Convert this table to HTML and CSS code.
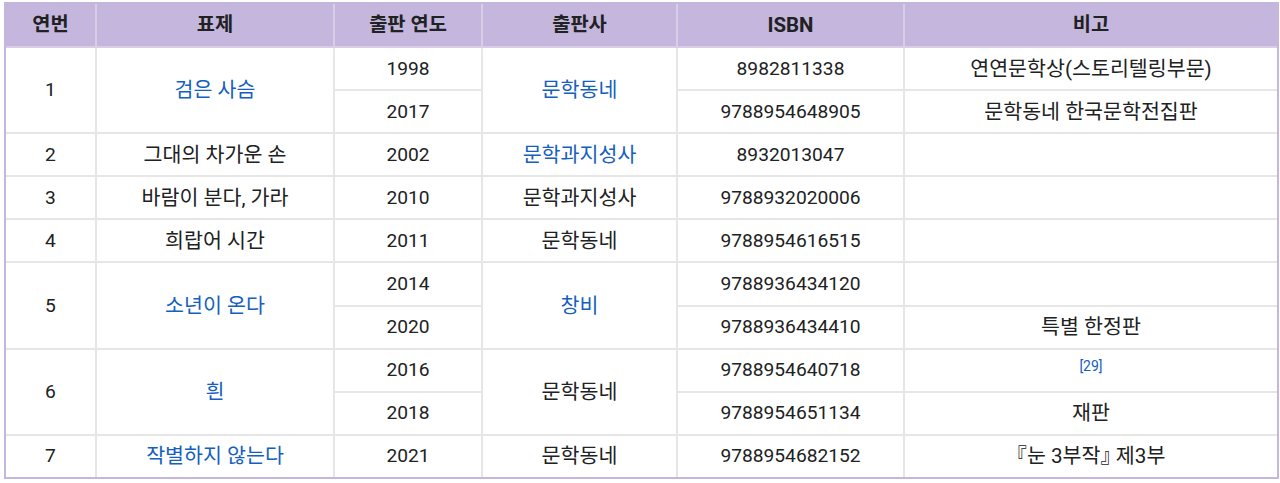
FILE: index.html
```html
<!DOCTYPE html>
<html lang="ko">
<head>
<meta charset="utf-8">
<title>작품 목록</title>
<link rel="stylesheet" href="styles.css">
</head>
<body>
<div class="wrap">
<table class="works">
  <colgroup>
    <col class="c-no"><col class="c-title"><col class="c-year"><col class="c-pub"><col class="c-isbn"><col class="c-note">
  </colgroup>
  <thead>
    <tr><th>연번</th><th>표제</th><th>출판 연도</th><th>출판사</th><th class="latin">ISBN</th><th>비고</th></tr>
  </thead>
  <tbody>
    <tr><td class="num" rowspan="2">1</td><td rowspan="2"><a href="#">검은 사슴</a></td><td class="num">1998</td><td rowspan="2"><a href="#">문학동네</a></td><td class="num">8982811338</td><td>연연문학상(스토리텔링부문)</td></tr>
    <tr><td class="num">2017</td><td class="num">9788954648905</td><td>문학동네 한국문학전집판</td></tr>
    <tr><td class="num">2</td><td>그대의 차가운 손</td><td class="num">2002</td><td><a href="#">문학과지성사</a></td><td class="num">8932013047</td><td></td></tr>
    <tr><td class="num">3</td><td>바람이 분다, 가라</td><td class="num">2010</td><td>문학과지성사</td><td class="num">9788932020006</td><td></td></tr>
    <tr><td class="num">4</td><td>희랍어 시간</td><td class="num">2011</td><td>문학동네</td><td class="num">9788954616515</td><td></td></tr>
    <tr><td class="num" rowspan="2">5</td><td rowspan="2"><a href="#">소년이 온다</a></td><td class="num">2014</td><td rowspan="2"><a href="#">창비</a></td><td class="num">9788936434120</td><td></td></tr>
    <tr><td class="num">2020</td><td class="num">9788936434410</td><td>특별 한정판</td></tr>
    <tr><td class="num" rowspan="2">6</td><td rowspan="2"><a href="#">흰</a></td><td class="num">2016</td><td rowspan="2">문학동네</td><td class="num">9788954640718</td><td><sup class="ref"><a href="#">[29]</a></sup></td></tr>
    <tr><td class="num">2018</td><td class="num">9788954651134</td><td>재판</td></tr>
    <tr><td class="num">7</td><td><a href="#">작별하지 않는다</a></td><td class="num">2021</td><td>문학동네</td><td class="num">9788954682152</td><td class="halfpunct">『눈 3부작』 제3부</td></tr>
  </tbody>
</table>
</div>
</body>
</html>
```

FILE: styles.css
```css
html, body {
  margin: 0;
  padding: 0;
  background: #ffffff;
}

.wrap {
  padding: 2px 3px 0 4px;
}

.works {
  width: 1273px;
  border-collapse: collapse;
  table-layout: fixed;
  border: 2px double #c4b6dc;
  font-family: Roboto, "Noto Sans CJK KR", sans-serif;
  font-size: 20.6px;
  line-height: 28px;
  color: #202122;
}

.c-no { width: 91px; }
.c-title { width: 238px; }
.c-year { width: 148px; }
.c-pub { width: 195px; }
.c-isbn { width: 227px; }
.c-note { width: 374px; }

.works th,
.works td {
  text-align: center;
  vertical-align: middle;
  padding: 6.55px 6px;
  border: 2px solid #e6e6e6;
}

.works td.num {
  font-size: 19.2px;
}

.works td.halfpunct {
  font-feature-settings: "halt";
}

.works th {
  background: #c4b6dc;
  font-weight: 700;
  font-size: 19.8px;
  border-color: #d8cfe6;
  border-top-color: #c4b6dc;
  padding: 7px 6px;
}

.works th.latin {
  font-size: 20.4px;
}

.works a {
  color: #1560bd;
  text-decoration: none;
}

.ref {
  font-size: 14px;
  line-height: 0;
  vertical-align: 6px;
}
```
